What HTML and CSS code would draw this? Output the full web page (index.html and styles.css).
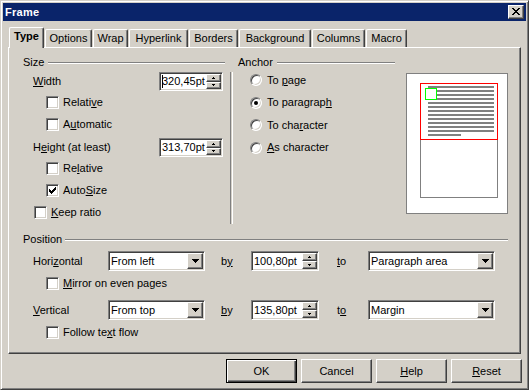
FILE: index.html
```html
<!DOCTYPE html>
<html>
<head>
<meta charset="utf-8">
<link rel="stylesheet" href="styles.css">
</head>
<body>
<div class="window">
  <div class="titlebar">
    <span class="title">Frame</span>
    <div class="close raised">
      <svg width="8" height="7" viewBox="0 0 8 7" shape-rendering="crispEdges"><path d="M0 0h2v1h-2z M6 0h2v1h-2z M1 1h2v1h-2z M5 1h2v1h-2z M2 2h4v1h-4z M3 3h2v1h-2z M2 4h4v1h-4z M1 5h2v1h-2z M5 5h2v1h-2z M0 6h2v1h-2z M6 6h2v1h-2z" fill="#000"/></svg>
    </div>
  </div>

  <div class="tabs">
    <div class="tab active t-type">Type</div>
    <div class="tab t-options">Options</div>
    <div class="tab t-wrap">Wrap</div>
    <div class="tab t-hyper">Hyperlink</div>
    <div class="tab t-borders">Borders</div>
    <div class="tab t-bg">Background</div>
    <div class="tab t-columns">Columns</div>
    <div class="tab t-macro">Macro</div>
  </div>

  <div class="panel">
    <div class="top">
      <div class="col-size">
        <div class="group-h"><span>Size</span><i class="rule"></i></div>
        <div class="frow">
          <span><u>W</u>idth</span>
          <div class="spin sunken w64">
            <span class="val"><i class="caret"></i>320,45pt</span>
            <div class="sbtns">
              <div class="sbtn raised"><svg width="5" height="2" shape-rendering="crispEdges"><path d="M2 0h1v1h-1z M1 1h3v1h-3z" fill="#000"/></svg></div>
              <div class="sbtn raised"><svg width="5" height="2" shape-rendering="crispEdges"><path d="M1 0h3v1h-3z M2 1h1v1h-1z" fill="#000"/></svg></div>
            </div>
          </div>
        </div>
        <div class="chk ind2"><span class="box"></span><span>Relati<u>v</u>e</span></div>
        <div class="chk ind2"><span class="box"></span><span>A<u>u</u>tomatic</span></div>
        <div class="frow">
          <span>H<u>e</u>ight (at least)</span>
          <div class="spin sunken w64">
            <span class="val">313,70pt</span>
            <div class="sbtns">
              <div class="sbtn raised"><svg width="5" height="2" shape-rendering="crispEdges"><path d="M2 0h1v1h-1z M1 1h3v1h-3z" fill="#000"/></svg></div>
              <div class="sbtn raised"><svg width="5" height="2" shape-rendering="crispEdges"><path d="M1 0h3v1h-3z M2 1h1v1h-1z" fill="#000"/></svg></div>
            </div>
          </div>
        </div>
        <div class="chk ind2"><span class="box"></span><span>Re<u>l</u>ative</span></div>
        <div class="chk ind2"><span class="box"><svg width="7" height="7" shape-rendering="crispEdges"><path d="M6 0h1v1h-1z M5 1h2v1h-2z M0 2h1v1h-1z M4 2h3v1h-3z M0 3h2v1h-2z M3 3h3v1h-3z M0 4h5v1h-5z M1 5h3v1h-3z M2 6h1v1h-1z" fill="#000"/></svg></span><span>Auto<u>S</u>ize</span></div>
        <div class="chk ind1"><span class="box"></span><span><u>K</u>eep ratio</span></div>
      </div>

      <div class="vsep"></div>

      <div class="col-anchor">
        <div class="group-h"><span>Anchor</span><i class="rule"></i></div>
        <div class="rad r1"><span class="radio"></span><span>To <u>p</u>age</span></div>
        <div class="rad r2"><span class="radio on"><i class="dot"></i></span><span>To paragrap<u>h</u></span></div>
        <div class="rad r1"><span class="radio"></span><span>To cha<u>r</u>acter</span></div>
        <div class="rad r2"><span class="radio"></span><span><u>A</u>s character</span></div>
      </div>

      <svg class="preview" width="102" height="141" viewBox="0 0 102 141" shape-rendering="crispEdges">
        <rect x="0.5" y="0.5" width="101" height="140" fill="#fff" stroke="#808080"/>
        <rect x="14.5" y="10.5" width="77" height="114" fill="#fff" stroke="#808080"/>
        <g fill="#808080">
          <rect x="22" y="13" width="66" height="2"/>
          <rect x="22" y="17" width="66" height="2"/>
          <rect x="22" y="21" width="66" height="2"/>
          <rect x="22" y="25" width="66" height="2"/>
          <rect x="22" y="29" width="66" height="2"/>
          <rect x="22" y="33" width="66" height="2"/>
          <rect x="22" y="37" width="66" height="2"/>
          <rect x="22" y="41" width="66" height="2"/>
          <rect x="22" y="45" width="66" height="2"/>
          <rect x="22" y="49" width="66" height="2"/>
          <rect x="22" y="53" width="66" height="2"/>
          <rect x="22" y="57" width="66" height="2"/>
          <rect x="22" y="61" width="33" height="2"/>
        </g>
        <rect x="14.5" y="10.5" width="77" height="56" fill="none" stroke="#ff0000"/>
        <rect x="19.5" y="15.5" width="11" height="11" fill="#fff" stroke="#00ff00"/>
      </svg>
    </div>

    <div class="group-h pos"><span>Position</span><i class="rule"></i></div>
    <div class="prow first">
      <span class="plabel">Hori<u>z</u>ontal</span>
      <div class="combo sunken w97"><span class="val">From left</span><div class="cbtn raised"><svg width="7" height="4" shape-rendering="crispEdges"><path d="M0 0h7v1h-7z M1 1h5v1h-5z M2 2h3v1h-3z M3 3h1v1h-1z" fill="#000"/></svg></div></div>
      <span class="by">b<u>y</u></span>
      <div class="spin sunken w68">
        <span class="val">100,80pt</span>
        <div class="sbtns">
          <div class="sbtn raised"><svg width="5" height="2" shape-rendering="crispEdges"><path d="M2 0h1v1h-1z M1 1h3v1h-3z" fill="#000"/></svg></div>
          <div class="sbtn raised"><svg width="5" height="2" shape-rendering="crispEdges"><path d="M1 0h3v1h-3z M2 1h1v1h-1z" fill="#000"/></svg></div>
        </div>
      </div>
      <span class="to"><u>t</u>o</span>
      <div class="combo sunken w127"><span class="val">Paragraph area</span><div class="cbtn raised"><svg width="7" height="4" shape-rendering="crispEdges"><path d="M0 0h7v1h-7z M1 1h5v1h-5z M2 2h3v1h-3z M3 3h1v1h-1z" fill="#000"/></svg></div></div>
    </div>
    <div class="chk ind2 pchk"><span class="box"></span><span><u>M</u>irror on even pages</span></div>
    <div class="prow second">
      <span class="plabel"><u>V</u>ertical</span>
      <div class="combo sunken w97"><span class="val">From top</span><div class="cbtn raised"><svg width="7" height="4" shape-rendering="crispEdges"><path d="M0 0h7v1h-7z M1 1h5v1h-5z M2 2h3v1h-3z M3 3h1v1h-1z" fill="#000"/></svg></div></div>
      <span class="by"><u>b</u>y</span>
      <div class="spin sunken w68">
        <span class="val">135,80pt</span>
        <div class="sbtns">
          <div class="sbtn raised"><svg width="5" height="2" shape-rendering="crispEdges"><path d="M2 0h1v1h-1z M1 1h3v1h-3z" fill="#000"/></svg></div>
          <div class="sbtn raised"><svg width="5" height="2" shape-rendering="crispEdges"><path d="M1 0h3v1h-3z M2 1h1v1h-1z" fill="#000"/></svg></div>
        </div>
      </div>
      <span class="to">t<u>o</u></span>
      <div class="combo sunken w127"><span class="val">Margin</span><div class="cbtn raised"><svg width="7" height="4" shape-rendering="crispEdges"><path d="M0 0h7v1h-7z M1 1h5v1h-5z M2 2h3v1h-3z M3 3h1v1h-1z" fill="#000"/></svg></div></div>
    </div>
    <div class="chk ind2 pchk"><span class="box"></span><span>Follow te<u>x</u>t flow</span></div>
  </div>

  <div class="buttons">
    <div class="btn default">OK</div>
    <div class="btn raised">Cancel</div>
    <div class="btn raised"><u>H</u>elp</div>
    <div class="btn raised"><u>R</u>eset</div>
  </div>
</div>
</body>
</html>
```

FILE: styles.css
```css
html, body {
  margin: 0;
  padding: 0;
  background: #d4d0c8;
}
body {
  font-family: "Liberation Sans", Arial, sans-serif;
  font-size: 11px;
  line-height: 13px;
  color: #000;
}
u { text-underline-offset: 1px; }

.window {
  width: 529px;
  height: 390px;
  box-sizing: border-box;
  background: #d4d0c8;
  border: 1px solid;
  border-color: #d4d0c8 #404040 #404040 #d4d0c8;
  box-shadow: inset 1px 1px #fff, inset -1px -1px #808080;
  padding: 2px;
  display: flex;
  flex-direction: column;
}

.raised {
  background: #d4d0c8;
  border: 1px solid;
  border-color: #fff #404040 #404040 #fff;
  box-shadow: inset -1px -1px #808080;
  box-sizing: border-box;
}
.sunken {
  background: #fff;
  border: 1px solid;
  border-color: #808080 #fff #fff #808080;
  box-shadow: inset 1px 1px #404040, inset -1px -1px #d4d0c8;
  box-sizing: border-box;
}

/* title bar */
.titlebar {
  height: 18px;
  background: #0a246a;
  display: flex;
  align-items: center;
  padding-left: 2px;
  padding-right: 2px;
}
.title {
  color: #fff;
  font-weight: bold;
  font-size: 11px;
  letter-spacing: 0.3px;
  flex: 1;
}
.close {
  width: 16px;
  height: 14px;
  display: flex;
  align-items: center;
  justify-content: center;
  padding-bottom: 1px;
}

/* tabs */
.tabs {
  display: flex;
  align-items: flex-end;
  height: 20px;
  margin-top: 6px;
  margin-left: 6px;
  gap: 1px;
}
.tab {
  height: 18px;
  box-sizing: border-box;
  border-top: 1px solid #fff;
  border-left: 1px solid #fff;
  border-right: 1px solid #404040;
  border-radius: 2px 2px 0 0;
  box-shadow: inset -1px 0 #808080;
  display: flex;
  align-items: center;
  justify-content: center;
  padding-bottom: 1px;
}
.tab.active {
  height: 21px;
  margin-bottom: -1px;
  font-weight: bold;
  position: relative;
  z-index: 1;
  background: #d4d0c8;
  padding-bottom: 3px;
}
.t-type { width: 35px; }
.t-options { width: 47px; }
.t-wrap { width: 35px; }
.t-hyper { width: 59px; }
.t-borders { width: 49px; }
.t-bg { width: 72px; }
.t-columns { width: 53px; }
.t-macro { width: 41px; }

/* panel */
.panel {
  margin-left: 5px;
  width: 513px;
  height: 307px;
  box-sizing: border-box;
  border: 1px solid;
  border-color: #fff #404040 #404040 #fff;
  box-shadow: inset -1px -1px #808080;
  padding: 7px 0 0 14px;
}

.top {
  display: flex;
  align-items: flex-start;
}
.col-size { width: 202px; }
.vsep {
  width: 1px;
  height: 152px;
  margin-top: 17px;
  margin-left: 5px;
  border-left: 1px solid #808080;
  border-right: 1px solid #fff;
}
.col-anchor {
  width: 157px;
  margin-left: 5px;
}
.preview {
  display: block;
  margin-left: 11px;
  margin-top: 18px;
}

.group-h {
  height: 14px;
  display: flex;
  align-items: center;
  gap: 4px;
}
.rule {
  flex: 1;
  height: 0;
  border-top: 1px solid #808080;
  border-bottom: 1px solid #fff;
  margin-top: 1px;
}
.group-h.pos {
  width: 485px;
  margin-top: 8px;
  gap: 3px;
}

.frow {
  height: 19px;
  margin-top: 3px;
  padding-left: 10px;
  display: flex;
  align-items: center;
}
.frow:first-of-type { margin-top: 3px; }
.frow .spin { margin-left: auto; margin-right: 2px; }

.spin, .combo {
  display: flex;
  align-items: stretch;
  padding: 1px;
}
.spin { height: 19px; }
.prow .spin, .prow .combo { height: 20px; }
.w64 { width: 64px; }
.w68 { width: 68px; }
.w97 { width: 97px; }
.w127 { width: 127px; }
.val {
  flex: 1;
  overflow: hidden;
  white-space: nowrap;
  display: flex;
  align-items: center;
  padding-left: 1px;
}
.caret {
  display: inline-block;
  width: 1px;
  height: 13px;
  background: #000;
  margin-right: -1px;
}
.sbtns {
  width: 15px;
  display: flex;
  flex-direction: column;
}
.sbtn {
  flex: 1;
  display: flex;
  align-items: center;
  justify-content: center;
}
.sbtn svg { display: block; }
.cbtn {
  width: 16px;
  display: flex;
  align-items: center;
  justify-content: center;
}
.cbtn svg { display: block; }

.chk {
  height: 22px;
  display: flex;
  align-items: center;
}
.ind2 { padding-left: 23px; }
.ind1 { padding-left: 11px; }
.box {
  width: 13px;
  height: 13px;
  box-sizing: border-box;
  background: #fff;
  border: 1px solid;
  border-color: #808080 #fff #fff #808080;
  box-shadow: inset 1px 1px #404040, inset -1px -1px #d4d0c8;
  margin-right: 4px;
  display: flex;
  align-items: center;
  justify-content: center;
}
.box svg { display: block; }

.rad {
  display: flex;
  align-items: center;
  padding-left: 12px;
}
.r1 { height: 22px; }
.r2 { height: 23px; }
.radio {
  width: 12px;
  height: 12px;
  box-sizing: border-box;
  border-radius: 50%;
  background: #fff;
  border: 1px solid;
  border-color: #808080 #fff #fff #808080;
  box-shadow: inset 1px 1px #404040, inset -1px -1px #d4d0c8;
  margin-right: 5px;
  display: flex;
  align-items: center;
  justify-content: center;
}
.dot {
  width: 4px;
  height: 4px;
  border-radius: 50%;
  background: #000;
}

.prow {
  display: flex;
  align-items: center;
  padding-left: 10px;
  height: 20px;
}
.prow.first { margin-top: 5px; }
.prow.second { margin-top: 6px; }
.pchk { margin-top: 1px; }
.plabel { width: 75px; }
.by { width: 30px; margin-left: 16px; }
.to { width: 31px; margin-left: 18px; }

/* buttons */
.buttons {
  display: flex;
  justify-content: flex-end;
  gap: 4px;
  margin-top: 5px;
  padding-right: 4px;
}
.btn {
  width: 71px;
  height: 24px;
  display: flex;
  align-items: center;
  justify-content: center;
  box-sizing: border-box;
}
.btn.default {
  border: 1px solid #000;
  background: #d4d0c8;
  box-shadow: inset 1px 1px #fff, inset -1px -1px #404040, inset -2px -2px #808080;
}
```
